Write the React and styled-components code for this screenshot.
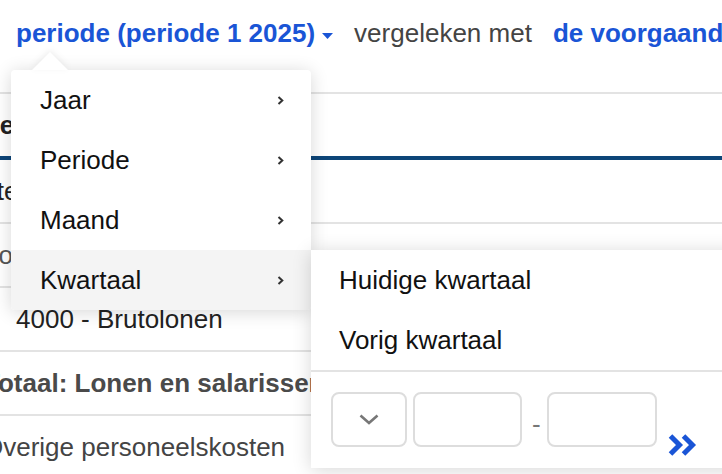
import React from 'react';
import styled, { createGlobalStyle } from 'styled-components';

const blue = '#1a55d6';
const navy = '#0d4578';
const rule = '#e3e3e3';

const GlobalStyle = createGlobalStyle`
  body {
    margin: 0;
    background: #fff;
    font-family: "Liberation Sans", Arial, sans-serif;
    overflow: hidden;
  }
`;

const Page = styled.div`
  position: relative;
  width: 722px;
  height: 474px;
  overflow: hidden;
`;

const Header = styled.div`
  height: 94px;
  box-sizing: border-box;
  padding: 18px 0 0 16px;
  border-bottom: 2px solid ${rule};
`;

const HeaderLine = styled.div`
  display: flex;
  align-items: baseline;
  height: 30px;
  line-height: 30px;
  white-space: nowrap;
  & > * {
    flex-shrink: 0;
  }
`;

const Link = styled.span`
  font-size: 26px;
  font-weight: 700;
  color: ${blue};
  margin-left: ${(p) => p.$gap || 0}px;
`;

const Muted = styled.span`
  font-size: 26px;
  color: #444;
  margin-left: 21px;
`;

const Caret = styled.svg`
  align-self: center;
  margin: 5px 0 0 7px;
`;

const Row = styled.div`
  display: flex;
  align-items: center;
  height: 62px;
  border-bottom: ${(p) => (p.$thick ? `4px solid ${navy}` : `2px solid ${rule}`)};
  font-size: 26px;
  font-weight: ${(p) => (p.$bold ? 700 : 400)};
  color: ${(p) => p.$color || '#222'};
  white-space: nowrap;
`;

const Cell = styled.span`
  margin-left: ${(p) => p.$indent}px;
`;

const Menu = styled.div`
  position: absolute;
  left: 11px;
  top: 70px;
  width: 300px;
  background: #fff;
  border-radius: 4px;
  box-shadow: 0 2px 18px rgba(0, 0, 0, 0.16);
  z-index: 2;
`;

const Pointer = styled.svg`
  position: absolute;
  left: 21px;
  top: -18px;
  filter: drop-shadow(0 -2px 3px rgba(0, 0, 0, 0.07));
`;

const Item = styled.div`
  display: flex;
  align-items: center;
  justify-content: space-between;
  height: 60px;
  padding: 0 27px 0 29px;
  font-size: 26px;
  color: #111;
  background: ${(p) => (p.$active ? '#f4f4f4' : 'transparent')};
  border-radius: ${(p) => (p.$active ? '0 0 4px 4px' : '0')};
`;

const Submenu = styled.div`
  position: absolute;
  left: 300px;
  top: 180px;
  width: 440px;
  background: #fff;
  box-shadow: 0 2px 18px rgba(0, 0, 0, 0.16);
  z-index: 3;
`;

const SubItem = styled.div`
  display: flex;
  align-items: center;
  height: 60px;
  padding-left: 28px;
  font-size: 26px;
  color: #111;
`;

const RangeForm = styled.div`
  display: flex;
  align-items: center;
  padding: 20px 20px 21px;
  border-top: 2px solid ${rule};
`;

const SelectBox = styled.div`
  display: flex;
  align-items: center;
  justify-content: center;
  width: 76px;
  height: 55px;
  box-sizing: border-box;
  border: 2px solid #ddd;
  border-radius: 8px;
`;

const Field = styled.div`
  width: ${(p) => p.$w}px;
  height: 55px;
  box-sizing: border-box;
  border: 2px solid #ddd;
  border-radius: 8px;
  margin-left: ${(p) => p.$gap}px;
`;

const Dash = styled.span`
  font-size: 26px;
  line-height: 26px;
  color: #777;
  margin: 9px 6px 0 10px;
`;

const Go = styled.svg`
  align-self: flex-end;
  margin: 0 0 -9px 11px;
`;

const Chevron = () => (
  <svg width="7" height="9" viewBox="0 0 7 9">
    <path d="M1.5 1 L5.3 4.5 L1.5 8" fill="none" stroke="#333" strokeWidth="2" />
  </svg>
);

const menuItems = ['Jaar', 'Periode', 'Maand', 'Kwartaal'];

export default function App() {
  return (
    <Page>
      <GlobalStyle />
      <Header>
        <HeaderLine>
          <Link>periode (periode 1 2025)</Link>
          <Caret width="11" height="6" viewBox="0 0 11 6">
            <path d="M0 0 H11 L5.5 6 Z" fill={blue} />
          </Caret>
          <Muted>vergeleken met</Muted>
          <Link $gap={21}>de voorgaande periode</Link>
        </HeaderLine>
      </Header>

      <Row $thick $bold>
        <Cell $indent={-19}>Rekeningen</Cell>
      </Row>
      <Row>
        <Cell $indent={-48}>Kosten</Cell>
      </Row>
      <Row $color="#555">
        <Cell $indent={-16}>Lonen en salarissen</Cell>
      </Row>
      <Row>
        <Cell $indent={16}>4000 - Brutolonen</Cell>
      </Row>
      <Row $bold $color="#4a4a4a">
        <Cell $indent={-16}>Totaal: Lonen en salarissen</Cell>
      </Row>
      <Row $color="#444">
        <Cell $indent={-17}>Overige personeelskosten</Cell>
      </Row>

      <Menu>
        <Pointer width="36" height="18" viewBox="0 0 36 18">
          <path d="M0 18 L18 0 L36 18 Z" fill="#fff" />
        </Pointer>
        {menuItems.map((label) => (
          <Item key={label} $active={label === 'Kwartaal'}>
            {label}
            <Chevron />
          </Item>
        ))}
        <Submenu>
          <SubItem>Huidige kwartaal</SubItem>
          <SubItem>Vorig kwartaal</SubItem>
          <RangeForm>
            <SelectBox>
              <svg width="20" height="11" viewBox="0 0 20 11">
                <path d="M1.5 1.5 L10 9 L18.5 1.5" fill="none" stroke="#777" strokeWidth="2.6" />
              </svg>
            </SelectBox>
            <Field $w={109} $gap={6} />
            <Dash>-</Dash>
            <Field $w={110} $gap={0} />
            <Go width="30" height="22" viewBox="0 0 30 22">
              <path d="M2.5 2 L11.5 11 L2.5 20" fill="none" stroke={blue} strokeWidth="5" />
              <path d="M15.5 2 L24.5 11 L15.5 20" fill="none" stroke={blue} strokeWidth="5" />
            </Go>
          </RangeForm>
        </Submenu>
      </Menu>
    </Page>
  );
}
